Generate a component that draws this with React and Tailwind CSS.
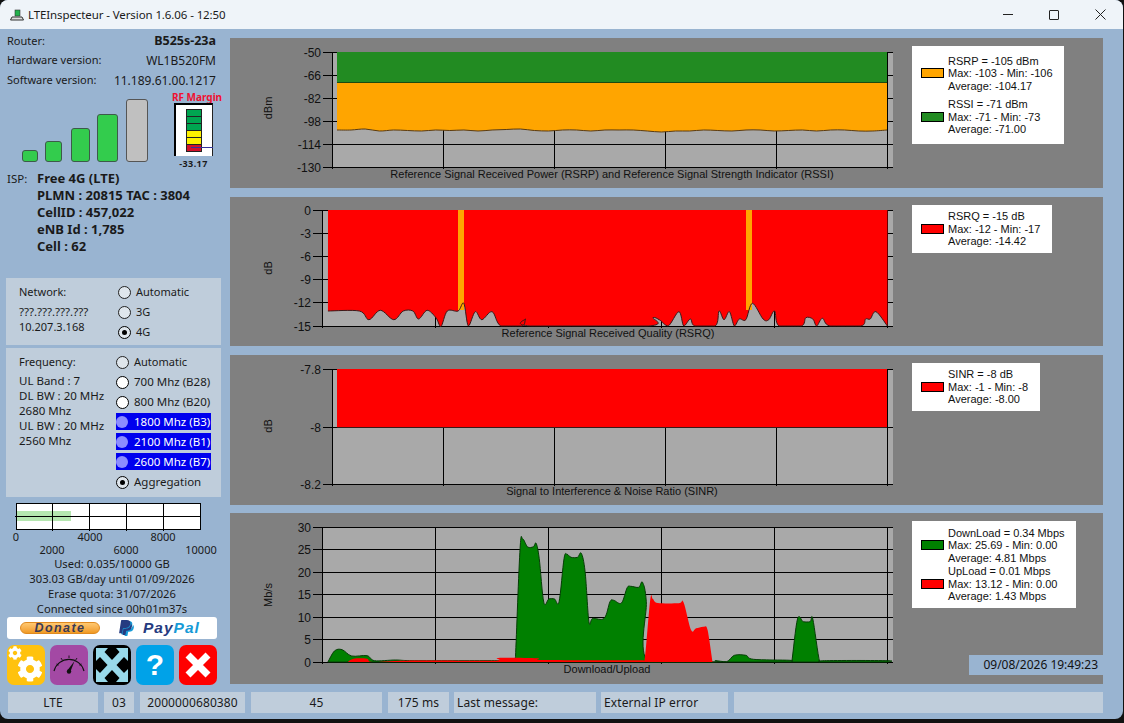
import React from "react";
import { FaCog, FaPaypal } from "react-icons/fa";

// smooth line through points (catmull-rom), kept above the chart's floor
const smooth = (pts, floor = 9999) => {
    let d = `M${pts[0][0]} ${pts[0][1]}`;
    for (let i = 0; i < pts.length - 1; i++) {
        const p0 = pts[i - 1] || pts[i];
        const p1 = pts[i];
        const p2 = pts[i + 1];
        const p3 = pts[i + 2] || p2;
        const c1x = p1[0] + (p2[0] - p0[0]) / 6;
        const c1y = Math.min(p1[1] + (p2[1] - p0[1]) / 6, floor);
        const c2x = p2[0] - (p3[0] - p1[0]) / 6;
        const c2y = Math.min(p2[1] - (p3[1] - p1[1]) / 6, floor);
        d += `C${c1x.toFixed(1)} ${c1y.toFixed(1)} ${c2x.toFixed(1)} ${c2y.toFixed(1)} ${p2[0].toFixed(1)} ${p2[1].toFixed(1)}`;
    }
    return d;
};

// points below were read off at x=(px-300)*2.613, y=(py-top)*3
const scale = (arr, top) => arr.map(([x, y]) => [300 + x / 2.613, top + y / 3]);

const rsrpY = [130, 130, 129, 131, 130, 130.5, 131, 130, 130.5, 130, 131, 130, 129.5, 129, 130.5, 131, 130, 130, 131, 130, 130, 130, 131, 132, 131, 131, 130, 130.5, 131, 130, 130, 131, 130.5, 130, 131, 130, 130, 131, 131, 130];
const rsrpPts = rsrpY.map((y, i) => [337 + (i * 550) / 39, y]);

const rsrqPts = scale([[73, 348], [155, 348], [180, 374], [210, 346], [245, 374], [270, 348], [295, 348], [310, 372], [332, 346], [355, 368], [368, 395], [385, 348], [413, 348], [428, 325], [440, 393], [458, 350], [475, 374], [502, 350], [525, 393], [580, 393], [590, 372], [602, 393], [910, 393], [922, 368], [940, 375], [962, 393], [990, 350], [1003, 393], [1020, 372], [1032, 393], [1085, 393], [1095, 348], [1108, 374], [1122, 350], [1135, 393], [1148, 372], [1165, 374], [1182, 325], [1210, 372], [1225, 374], [1240, 348], [1252, 393], [1310, 393], [1322, 368], [1340, 372], [1350, 393], [1365, 370], [1385, 393], [1465, 393], [1478, 372], [1490, 372], [1505, 350], [1535, 393]], 195);

const downPts = scale([[73, 441], [90, 408], [110, 404], [135, 423], [175, 422], [195, 437], [250, 435], [300, 437], [500, 437], [560, 437], [563, 425], [575, 100], [582, 72], [595, 96], [610, 95], [617, 85], [625, 130], [637, 262], [650, 252], [665, 252], [677, 260], [690, 130], [698, 118], [708, 127], [725, 127], [735, 115], [745, 170], [755, 320], [765, 310], [795, 310], [810, 260], [820, 256], [840, 264], [855, 218], [865, 214], [885, 217], [895, 202], [905, 260], [910, 441], [1080, 441], [1085, 437], [1115, 440], [1135, 421], [1165, 421], [1185, 433], [1280, 436], [1285, 440], [1300, 312], [1315, 320], [1333, 320], [1340, 312], [1358, 441], [1370, 437], [1535, 437], [1535, 441]], 515);

const upPts = scale([[125, 441], [140, 431], [175, 431], [190, 441], [280, 437], [505, 437], [518, 429], [620, 430], [640, 435], [890, 436], [900, 441], [915, 255], [922, 252], [935, 264], [990, 265], [1002, 262], [1022, 345], [1035, 340], [1055, 335], [1065, 345], [1078, 441]], 515);

const Plot = ({ vb, x0, x1, gridX, ticks, unit, unitY, title, titleX, titleY, children }) => {
    const top = ticks[0][0];
    const bottom = ticks[ticks.length - 1][0];
    return (
        <svg viewBox={vb} className="w-[682px] h-full shrink-0 font-['Liberation_Sans',sans-serif]">
            <rect x={x0} y={top} width={x1 - x0} height={bottom - top} fill="#a9a9a9" />
            {gridX.map((x) => (
                <line key={x} x1={x} x2={x} y1={top} y2={bottom + 2} stroke="#000" />
            ))}
            {ticks.map(([y]) => (
                <line key={y} x1={x0 - 9} x2={x1} y1={y + 0.5} y2={y + 0.5} stroke="#000" />
            ))}
            {children}
            {ticks.map(([y, label]) => (
                <text key={label} x={x0 - 11} y={y + 4.5} textAnchor="end" fontSize="12" fill="#111">{label}</text>
            ))}
            <text transform={`translate(272 ${unitY}) rotate(-90)`} textAnchor="middle" fontSize="11" fill="#111">{unit}</text>
            <text x={titleX} y={titleY} textAnchor="middle" fontSize="11" fill="#111">{title}</text>
        </svg>
    );
};

const Swatch = ({ color }) => (
    <div className={`w-[23px] h-[10px] border border-black shrink-0 ${color}`}></div>
);

const LegendRow = ({ color, lines }) => (
    <div className="flex items-center gap-[4px]">
        <Swatch color={color} />
        <div className="leading-[12.5px] whitespace-nowrap">
            {lines.map((l) => (
                <div key={l}>{l}</div>
            ))}
        </div>
    </div>
);

const Radio = ({ kind }) => {
    if (kind === "dot") {
        return (
            <div className="w-[13px] h-[13px] rounded-full border border-black bg-[#dfe6ec] flex items-center justify-center shrink-0">
                <div className="w-[5px] h-[5px] rounded-full bg-black"></div>
            </div>
        );
    }
    if (kind === "white") return <div className="w-[13px] h-[13px] rounded-full border border-black bg-white shrink-0"></div>;
    if (kind === "blue") return <div className="w-[12px] h-[12px] rounded-full bg-[#8c8cff] shrink-0"></div>;
    return <div className="w-[13px] h-[13px] rounded-full border border-[#222] bg-[#dfe6ec] shrink-0"></div>;
};

const RadioRow = ({ kind, children }) => (
    <div className="flex items-center gap-[5px] h-5 whitespace-nowrap">
        <Radio kind={kind} />
        <span>{children}</span>
    </div>
);

const BlueRow = ({ children }) => (
    <div className="flex items-center gap-[6px] h-[17px] bg-[#0000ee] text-white mb-[3px] whitespace-nowrap">
        <Radio kind="blue" />
        <span>{children}</span>
    </div>
);

const Cell = ({ className, children }) => (
    <div className={`h-[21px] bg-[#bfcddb] flex items-center text-[12px] tracking-[0.1px] ${className}`}>{children}</div>
);

const App = () => {
    return (
        <div className="w-[1124px] h-[723px] bg-[#111] overflow-hidden font-['Noto_Sans',sans-serif] text-[#1a1a1a]">
            <div className="w-[1123px] h-[719px] bg-[#99b4d1] rounded-lg overflow-hidden flex flex-col">

                {/**TITLE BAR*/}
                <div className="h-[29px] bg-[#eff4f9] flex items-center shrink-0">
                    <svg width="16" height="16" viewBox="0 0 16 16" className="ml-[9px] mr-[3px]">
                        <rect x="6" y="3" width="5" height="6" fill="#22b14c" stroke="#333" strokeWidth="0.6" />
                        <path d="M3 10h10l1.500 3H1.500z" fill="#ddd" stroke="#333" strokeWidth="1" />
                    </svg>
                    <span className="text-[11.5px] tracking-[-0.1px]">LTEInspecteur - Version 1.6.06 - 12:50</span>
                    <div className="ml-auto flex">
                        <div className="w-[46px] h-[29px] flex items-center justify-center">
                            <div className="w-[10px] h-px bg-[#222]"></div>
                        </div>
                        <div className="w-[46px] h-[29px] flex items-center justify-center">
                            <div className="w-[10px] h-[10px] border border-[#222] rounded-[1px]"></div>
                        </div>
                        <div className="w-[46px] h-[29px] flex items-center justify-center">
                            <svg width="11" height="11" viewBox="0 0 11 11">
                                <path d="M.5.5l10 10M10.5.5l-10 10" stroke="#222" fill="none" />
                            </svg>
                        </div>
                    </div>
                </div>

                <div className="flex">
                    {/**SIDEBAR*/}
                    <div className="w-[230px] shrink-0 pt-[3px] text-[11.5px]">
                        <div className="pl-[7px] pr-[14px] text-[11px]">
                            <div className="flex justify-between items-center h-[19px]">
                                <span>Router:</span>
                                <span className="font-bold text-[12.5px]">B525s-23a</span>
                            </div>
                            <div className="flex justify-between items-center h-[19px]">
                                <span>Hardware version:</span>
                                <span className="text-[12px]">WL1B520FM</span>
                            </div>
                            <div className="flex justify-between items-center h-[21px]">
                                <span>Software version:</span>
                                <span className="text-[12px]">11.189.61.00.1217</span>
                            </div>
                        </div>

                        {/**SIGNAL BARS AND RF MARGIN*/}
                        <div className="flex h-[79px]">
                            <div className="flex items-end h-[71px] pl-[22px]">
                                <div className="w-[16px] h-[12px] rounded-[3px] border border-[#3d5a4a] bg-[#33cc4d]"></div>
                                <div className="w-[17px] h-[21px] ml-[7px] rounded-[3px] border border-[#3d5a4a] bg-[#33cc4d]"></div>
                                <div className="w-[19px] h-[34px] ml-[9px] rounded-[3px] border border-[#3d5a4a] bg-[#33cc4d]"></div>
                                <div className="w-[21px] h-[48px] ml-[7px] rounded-[3px] border border-[#3d5a4a] bg-[#33cc4d]"></div>
                                <div className="w-[22px] h-[63px] ml-[8px] rounded-[3px] border border-[#555] bg-[#c0c0c0]"></div>
                            </div>
                            <div className="ml-[26px] w-[46px] flex flex-col items-center">
                                <div className="text-[10px] leading-[12px] font-bold text-[#f01030] whitespace-nowrap">RF Margin</div>
                                <div className="w-[39px] h-[55px] bg-white border-t-2 border-l-2 border-black border-r border-r-[#222] mr-[7px] pt-[4px] pl-[10px]">
                                    <svg width="27" height="44" viewBox="0 0 27 44" className="block">
                                        <rect x="0.5" y="0.5" width="15" height="7" fill="#00a651" stroke="#222" />
                                        <rect x="0.5" y="7.5" width="15" height="7" fill="#00a651" stroke="#222" />
                                        <rect x="0.5" y="14.5" width="15" height="7" fill="#00a651" stroke="#222" />
                                        <rect x="0.5" y="21.5" width="15" height="7" fill="#fff200" stroke="#222" />
                                        <rect x="0.5" y="28.5" width="15" height="7" fill="#fff200" stroke="#222" />
                                        <rect x="0.5" y="35.5" width="15" height="7" fill="#d2102a" stroke="#222" />
                                        <line x1="5" x2="27" y1="38.5" y2="38.5" stroke="#33339a" />
                                    </svg>
                                </div>
                                <div className="text-[9px] leading-[12px] mt-[2px] font-bold mr-[7px] tracking-[0.4px]">-33.17</div>
                            </div>
                        </div>

                        {/**ISP*/}
                        <div className="flex pl-[7px] h-[85px]">
                            <span className="w-[30px] leading-[17px]">ISP:</span>
                            <div className="font-bold leading-[17px] text-[13px] whitespace-nowrap">
                                <div>Free 4G (LTE)</div>
                                <div>PLMN : 20815 TAC : 3804</div>
                                <div>CellID : 457,022</div>
                                <div>eNB Id : 1,785</div>
                                <div>Cell : 62</div>
                            </div>
                        </div>

                        {/**NETWORK*/}
                        <div className="mt-[23px] ml-[6px] w-[215px] h-[67px] bg-[#bfcddb] flex pl-[13px] pt-[4px]">
                            <div className="w-[99px]">
                                <div className="h-5 flex items-center text-[11px]">Network:</div>
                                <div className="leading-[15px] mt-[2px]">
                                    <div>???.???.???.???</div>
                                    <div className="text-[11px]">10.207.3.168</div>
                                </div>
                            </div>
                            <div className="text-[11px]">
                                <RadioRow>Automatic</RadioRow>
                                <RadioRow>3G</RadioRow>
                                <RadioRow kind="dot">4G</RadioRow>
                            </div>
                        </div>

                        {/**FREQUENCY*/}
                        <div className="mt-[3px] ml-[6px] w-[215px] h-[149px] bg-[#bfcddb] flex pl-[13px] pt-[4px]">
                            <div className="w-[97px] whitespace-nowrap">
                                <div className="h-5 flex items-center text-[11px]">Frequency:</div>
                                <div className="leading-[15px] mt-[1px]">
                                    <div>UL Band : 7</div>
                                    <div>DL BW : 20 MHz</div>
                                    <div>2680 Mhz</div>
                                    <div>UL BW : 20 MHz</div>
                                    <div>2560 Mhz</div>
                                </div>
                            </div>
                            <div className="w-[95px]">
                                <div className="text-[11px]"><RadioRow>Automatic</RadioRow></div>
                                <RadioRow kind="white">700 Mhz (B28)</RadioRow>
                                <RadioRow kind="white">800 Mhz (B20)</RadioRow>
                                <div className="h-[1px]"></div>
                                <BlueRow>1800 Mhz (B3)</BlueRow>
                                <BlueRow>2100 Mhz (B1)</BlueRow>
                                <BlueRow>2600 Mhz (B7)</BlueRow>
                                <div className="-mt-[1px]"><RadioRow kind="dot">Aggregation</RadioRow></div>
                            </div>
                        </div>

                        {/**QUOTA*/}
                        <svg viewBox="0 503 230 53" className="w-[230px] h-[53px] mt-[6px] block font-['Noto_Sans',sans-serif]">
                            <rect x="16.5" y="503.5" width="184" height="26" fill="#fff" stroke="#000" />
                            <rect x="17" y="511" width="54" height="10" fill="#b5e6b0" />
                            <line x1="15" x2="200" y1="516.5" y2="516.5" stroke="#000" />
                            {[52.5, 89.5, 126.5, 163.5].map((x) => (
                                <line key={x} x1={x} x2={x} y1="503" y2="531" stroke="#000" />
                            ))}
                            <text x="16" y="541" textAnchor="middle" fontSize="11" fill="#1a1a1a">0</text>
                            <text x="90" y="541" textAnchor="middle" fontSize="11" fill="#1a1a1a">4000</text>
                            <text x="163" y="541" textAnchor="middle" fontSize="11" fill="#1a1a1a">8000</text>
                            <text x="52" y="554" textAnchor="middle" fontSize="11" fill="#1a1a1a">2000</text>
                            <text x="126" y="554" textAnchor="middle" fontSize="11" fill="#1a1a1a">6000</text>
                            <text x="201" y="554" textAnchor="middle" fontSize="11" fill="#1a1a1a">10000</text>
                        </svg>
                        <div className="text-center w-[224px] leading-[15px] text-[11.2px] whitespace-nowrap">
                            <div>Used: 0.035/10000 GB</div>
                            <div>303.03 GB/day until 01/09/2026</div>
                            <div>Erase quota: 31/07/2026</div>
                            <div>Connected since 00h01m37s</div>
                        </div>

                        {/**DONATE*/}
                        <div className="mt-[1px] ml-[7px] w-[210px] h-[22px] bg-white rounded-[3px] flex items-center">
                            <div className="ml-[13px] w-[80px] h-[12px] rounded-full bg-gradient-to-b from-[#ffc870] to-[#f09a20] border border-[#e08a20] flex items-center justify-center">
                                <span className="font-['Liberation_Sans',sans-serif] text-[12.5px] leading-none font-bold italic text-[#3a3a55] tracking-[1.4px]">Donate</span>
                            </div>
                            <div className="relative ml-[17px] w-[19px] h-[18px]">
                                <FaPaypal className="absolute left-[2px] top-[1px] text-[#179bd7]" size={17} />
                                <FaPaypal className="absolute left-0 top-0 text-[#253b80]" size={17} />
                            </div>
                            <span className="ml-[7px] font-['Liberation_Sans',sans-serif] text-[15.5px] leading-none font-bold italic tracking-[1px] text-[#253b80]">
                                Pay<span className="text-[#179bd7]">Pal</span>
                            </span>
                        </div>

                        {/**BUTTONS*/}
                        <div className="mt-[6px] ml-[7px] flex gap-[5px]">
                            <div className="relative w-[38px] h-[40px] rounded-[7px] bg-[#ffc20e] overflow-hidden">
                                <FaCog className="absolute left-[1px] top-[1px] text-white" size={14} />
                                <FaCog className="absolute left-[10px] top-[11px] text-white" size={26} />
                            </div>
                            <div className="w-[38px] h-[40px] rounded-[7px] bg-[#a349a4] flex items-center justify-center">
                                <svg width="34" height="26" viewBox="0 0 34 26">
                                    <path d="M2 19A15.500 15.500 0 0 1 32 19" fill="none" stroke="#111" strokeWidth="1.2" />
                                    <path d="M17 3.500v2.500M9 6l1.300 2M25 6l-1.300 2M4.500 12l2 1.200M29.500 12l-2 1.200" stroke="#111" strokeWidth="0.9" />
                                    <path d="M22.500 9L18.500 19.500l-3-1.200z" fill="#111" />
                                    <circle cx="17" cy="19.500" r="2.200" fill="#111" />
                                </svg>
                            </div>
                            <div className="w-[38px] h-[40px] rounded-[7px] bg-black flex items-center justify-center">
                                <svg width="34" height="36" viewBox="0 0 34 36">
                                    <path d="M1 1h12L9.500 5l7.500 8 7.500-8L21 1h12v13l-4-4-7.500 8 7.500 8 4-4v13H21l3.500-4-7.500-8-7.500 8 3.500 4H1V22l4 4 7.500-8L5 10l-4 4z" fill="#99d9ea" />
                                </svg>
                            </div>
                            <div className="w-[38px] h-[40px] rounded-[7px] bg-[#00a2e8] flex items-center justify-center">
                                <span className="font-['Liberation_Sans',sans-serif] text-[30px] leading-none font-bold text-white">?</span>
                            </div>
                            <div className="w-[38px] h-[40px] rounded-[7px] bg-[#ff0000] flex items-center justify-center">
                                <svg width="28" height="28" viewBox="0 0 28 28">
                                    <path d="M4 4l20 20M24 4L4 24" stroke="#fff" strokeWidth="7" />
                                </svg>
                            </div>
                        </div>
                    </div>

                    {/**CHARTS*/}
                    <div className="w-[873px] pt-[9px] text-[11px] font-['Liberation_Sans',sans-serif] text-[#111]">

                        <div className="h-[150px] bg-[#808080] flex">
                            <Plot
                                vb="230 38 682 150" x0={332} x1={893}
                                gridX={[332.5, 443.5, 554.5, 665.5, 776.5, 887.5]}
                                ticks={[[52, "-50"], [75, "-66"], [98, "-82"], [121, "-98"], [144, "-114"], [167, "-130"]]}
                                unit="dBm" unitY={108} title="Reference Signal Received Power (RSRP) and Reference Signal Strength Indicator (RSSI)" titleX={612} titleY={178}
                            >
                                <path d={`M337 52H887V83H337Z`} fill="#228b22" />
                                <path d={`M337 83H887V130${smooth([...rsrpPts].reverse()).replace(/^M[^C]+/, "")}Z`} fill="#ffa500" />
                                <line x1="337" x2="887" y1="82.500" y2="82.500" stroke="#1c4a10" />
                                <path d={smooth(rsrpPts)} fill="none" stroke="#5a3a10" />
                            </Plot>
                            <div className="mt-[8px] w-[152px] h-[98px] bg-white flex flex-col justify-center gap-[6px] pl-[9px]">
                                <LegendRow color="bg-[#ffa500]" lines={["RSRP = -105 dBm", "Max: -103 - Min: -106", "Average: -104.17"]} />
                                <LegendRow color="bg-[#228b22]" lines={["RSSI = -71 dBm", "Max: -71 - Min: -73", "Average: -71.00"]} />
                            </div>
                        </div>

                        <div className="h-[149px] mt-[9px] bg-[#808080] flex">
                            <Plot
                                vb="230 197 682 149" x0={322} x1={893}
                                gridX={[322.5, 435.5, 548.5, 661.5, 774.5, 887.5]}
                                ticks={[[210, "0"], [233, "-3"], [256, "-6"], [279, "-9"], [302, "-12"], [326, "-15"]]}
                                unit="dB" unitY={268} title="Reference Signal Received Quality (RSRQ)" titleX={608} titleY={337}
                            >
                                <path d={`${smooth(rsrqPts, 326)}V210H328Z`} fill="#ff0000" />
                                <rect x="458" y="210" width="6" height="100" fill="#ffa500" />
                                <rect x="746" y="210" width="6" height="100" fill="#ffa500" />
                                <path d={smooth(rsrqPts, 326)} fill="none" stroke="#3a1a1a" />
                            </Plot>
                            <div className="mt-[8px] w-[140px] h-[48px] bg-white flex flex-col justify-center pl-[9px]">
                                <LegendRow color="bg-[#ff0000]" lines={["RSRQ = -15 dB", "Max: -12 - Min: -17", "Average: -14.42"]} />
                            </div>
                        </div>

                        <div className="h-[150px] mt-[9px] bg-[#808080] flex">
                            <Plot
                                vb="230 355 682 150" x0={332} x1={893}
                                gridX={[332.5, 443.5, 554.5, 665.5, 776.5, 887.5]}
                                ticks={[[369, "-7.8"], [427, "-8"], [484, "-8.2"]]}
                                unit="dB" unitY={426} title="Signal to Interference & Noise Ratio (SINR)" titleX={612} titleY={495}
                            >
                                <rect x="337" y="369" width="550" height="58" fill="#ff0000" />
                                <line x1="337" x2="887" y1="427.500" y2="427.500" stroke="#3a1a1a" />
                            </Plot>
                            <div className="mt-[8px] w-[128px] h-[48px] bg-white flex flex-col justify-center pl-[9px]">
                                <LegendRow color="bg-[#ff0000]" lines={["SINR = -8 dB", "Max: -1 - Min: -8", "Average: -8.00"]} />
                            </div>
                        </div>

                        <div className="h-[171px] mt-[8px] bg-[#808080] flex">
                            <Plot
                                vb="230 513 682 171" x0={322} x1={893}
                                gridX={[322.5, 435.5, 548.5, 661.5, 774.5, 887.5]}
                                ticks={[[527, "30"], [549, "25"], [572, "20"], [594, "15"], [617, "10"], [639, "5"], [662, "0"]]}
                                unit="Mb/s" unitY={595} title="Download/Upload" titleX={607} titleY={673}
                            >
                                <path d={`${smooth(downPts, 662)}Z`} fill="#008000" stroke="#063d06" />
                                <path d={`${smooth(upPts, 662)}Z`} fill="#ff0000" />
                            </Plot>
                            <div className="flex-1 flex flex-col">
                                <div className="mt-[8px] w-[164px] h-[87px] bg-white flex flex-col justify-center gap-[1px] pl-[9px]">
                                    <LegendRow color="bg-[#008000]" lines={["DownLoad = 0.34 Mbps", "Max: 25.69 - Min: 0.00", "Average: 4.81 Mbps"]} />
                                    <LegendRow color="bg-[#ff0000]" lines={["UpLoad = 0.01 Mbps", "Max: 13.12 - Min: 0.00", "Average: 1.43 Mbps"]} />
                                </div>
                                <div className="mt-[47px] self-end w-[134px] h-[20px] bg-[#99b4d1] flex items-center justify-end pr-[5px] font-['Noto_Sans',sans-serif] text-[12px] whitespace-nowrap">
                                    09/08/2026 19:49:23
                                </div>
                            </div>
                        </div>
                    </div>
                </div>

                {/**STATUS BAR*/}
                <div className="flex mt-[7px] pl-[8px]">
                    <Cell className="w-[90px] justify-center">LTE</Cell>
                    <Cell className="w-[30px] ml-[6px] justify-center">03</Cell>
                    <Cell className="w-[105px] ml-[6px] justify-center">2000000680380</Cell>
                    <Cell className="w-[131px] ml-[6px] justify-center">45</Cell>
                    <Cell className="w-[61px] ml-[6px] justify-center">175 ms</Cell>
                    <Cell className="w-[142px] ml-[5px] pl-[3px]">Last message:</Cell>
                    <Cell className="w-[127px] ml-[5px] pl-[3px]">External IP error</Cell>
                    <Cell className="w-[369px] ml-[6px]"></Cell>
                </div>
            </div>
        </div>
    );
};

export default App;
